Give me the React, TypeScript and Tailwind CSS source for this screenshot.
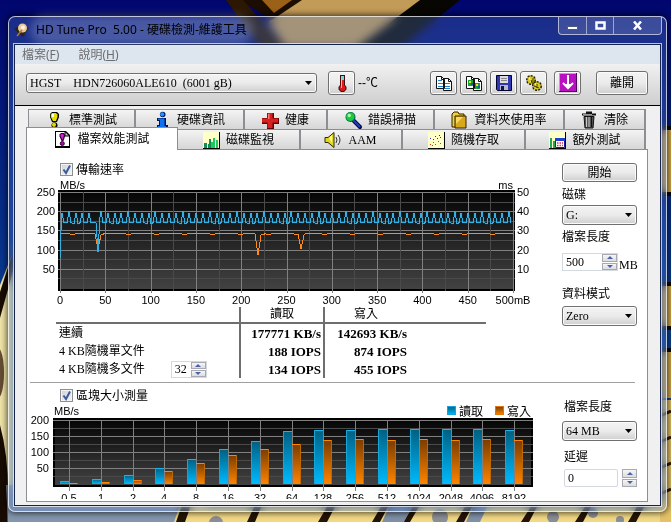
import { Fragment, type ReactNode } from "react";
import clsx from "clsx";

const READ_PEAKS = [
  2, 9, 16, 22, 29,
  ...Array.from({ length: 61 }, (_, i) => 41 + Math.round(i * 6.8)).filter((x) => x < 453),
];

const PLOT_W = 453;
const PLOT_H = 96;

const speedY = (speed: number) => PLOT_H - (speed / 250) * PLOT_H;

const readPoints = () => {
  const points: string[] = [`0,${speedY(75)}`];
  READ_PEAKS.forEach((x, i) => {
    const base = speedY(i % 5 === 2 ? 167 : 170);
    points.push(
      `${Math.max(x - 2, 1)},${i === 0 ? speedY(150) : base}`,
      `${x},${speedY(i % 4 === 1 ? 200 : 196)}`,
      `${x + 2},${base}`
    );
    if (x === 29) {
      points.push(`36,${speedY(170)}`, `38,${speedY(94)}`, `39,${speedY(140)}`);
    }
  });
  return points.join(" ");
};

const WRITE_DIPS = [
  { x: 38, low: 102 },
  { x: 198, low: 86 },
  { x: 241, low: 101 },
];

const writePoints = () => {
  const points: string[] = [`0,${speedY(128)}`, `1,${speedY(141)}`];
  for (let x = 5; x <= PLOT_W; x += 4) {
    const dip = WRITE_DIPS.find((d) => Math.abs(d.x - x) <= 3);
    if (dip) {
      if (!points.includes(`${dip.x},${speedY(dip.low)}`)) {
        points.push(
          `${dip.x - 3},${speedY(141)}`,
          `${dip.x},${speedY(dip.low)}`,
          `${dip.x + 3},${speedY(138)}`
        );
      }
      continue;
    }
    points.push(`${x},${speedY([141, 143, 142, 141, 139, 142, 141][(x * 3) % 7])}`);
  }
  return points.join(" ");
};

const BLOCKS = [
  { size: "0.5", read: 8, write: 2 },
  { size: "1", read: 17, write: 5 },
  { size: "2", read: 29, write: 14 },
  { size: "4", read: 51, write: 42 },
  { size: "8", read: 79, write: 67 },
  { size: "16", read: 110, write: 92 },
  { size: "32", read: 135, write: 110 },
  { size: "64", read: 166, write: 126 },
  { size: "128", read: 169, write: 138 },
  { size: "256", read: 169, write: 141 },
  { size: "512", read: 172, write: 138 },
  { size: "1024", read: 172, write: 141 },
  { size: "2048", read: 172, write: 138 },
  { size: "4096", read: 172, write: 141 },
  { size: "8192", read: 169, write: 138 },
];

const RESULTS = [
  { label: "連續", read: "177771 KB/s", write: "142693 KB/s" },
  { label: "4 KB隨機單文件", read: "188 IOPS", write: "874 IOPS" },
  { label: "4 KB隨機多文件", read: "134 IOPS", write: "455 IOPS", queue: true },
];

const Icon = ({ children }: { children: ReactNode }) => (
  <svg viewBox="0 0 16 16" className="size-4 shrink-0 overflow-visible" aria-hidden="true">
    {children}
  </svg>
);

const ExclamationIcon = () => (
  <Icon>
    <path d="M6 0h5l2 2v3l-2 5H6L4 5V2z" fill="#000" />
    <path d="M6 1h4l1.500 1.500V5L10 9H7L4.800 5V2.500z" fill="#e6e000" />
    <path d="M6 2h2v3H6z" fill="#fff" />
    <circle cx="8.500" cy="13.200" r="3" fill="#000" />
    <circle cx="8" cy="12.800" r="2.100" fill="#e0d800" />
  </Icon>
);

const InfoIcon = () => (
  <Icon>
    <circle cx="8.700" cy="2.500" r="2.800" fill="#001050" />
    <circle cx="8.200" cy="2.300" r="2.100" fill="#2090ff" />
    <path d="M3 6h9v7h2v3H3v-3h2V9H3z" fill="#001050" />
    <path d="M4 6.500h6.500V14H12v1H4v-1h2V8H4z" fill="#1070f0" />
  </Icon>
);

const CrossIcon = () => (
  <Icon>
    <path d="M5 1h7v5h5v6h-5v5H5v-5H0V6h5z" fill="#600" />
    <path d="M5.500 1h5v5.500H16v4h-5.500V16h-5v-5.500H0v-4h5.500z" fill="#d82020" />
    <path d="M6 2h1.500v5H1.500V7H6z" fill="#f77" />
  </Icon>
);

const SearchIcon = () => (
  <Icon>
    <path d="M8 8l7 7" stroke="#000040" strokeWidth="4" strokeLinecap="round" />
    <path d="M8.500 8.500l6 6" stroke="#2040c0" strokeWidth="2" strokeLinecap="round" />
    <circle cx="5.500" cy="5" r="5" fill="#064" />
    <circle cx="5.300" cy="4.800" r="4.200" fill="#20c840" />
    <circle cx="4.300" cy="3.500" r="1.700" fill="#a0ffa0" />
  </Icon>
);

const FolderIcon = () => (
  <Icon>
    <path d="M1 2l2-2h4l1 2h5v13H1z" fill="#f0d040" stroke="#302000" />
    <path d="M4 4h11v12H4z" fill="#d8a818" stroke="#302000" />
    <path d="M5 5h7L5 12z" fill="#f8d860" />
  </Icon>
);

const TrashIcon = () => (
  <Icon>
    <path d="M1 2.500h14M5 .500h6" stroke="#111" strokeWidth="2" />
    <path d="M3 4.500h10l-1 11.500H4z" fill="#555" stroke="#111" />
    <path d="M5.500 5v10M8 5v10" stroke="#ccc" />
    <path d="M10.500 5v10" stroke="#111" />
    <path d="M2 2.500h9" stroke="#999" />
  </Icon>
);

const FileTestIcon = () => (
  <Icon>
    <path d="M1 0h11l4 4v13H1z" fill="#000" />
    <path d="M2 1h9v4h4v10H2z" fill="#fff" />
    <path d="M11 1v4h4" fill="#ccc" stroke="#000" />
    <path d="M7 2h3l1 1.500v2L9.500 10h-2L5.500 5.500v-2z" fill="#300030" />
    <path d="M7 3h2l1 1-.500 2L8.500 9 6.500 5V4z" fill="#d020d0" />
    <circle cx="8.300" cy="12.500" r="2" fill="#a010a0" stroke="#300030" />
  </Icon>
);

const MonitorIcon = () => (
  <Icon>
    <path d="M0 0h17v17H0z" fill="#000" />
    <path d="M0 0h16v16H0z" fill="#ffffc8" />
    <path d="M1 16v-5h3v5zM5 16v-4h1V7h2v9z" fill="#109050" />
    <path d="M8 16v-6h2v6zM10 16V6h2v10zM13 16V8h2v8z" fill="#20c860" />
  </Icon>
);

const SpeakerIcon = () => (
  <Icon>
    <path d="M0 5.500h3l6-5v15l-6-5H0z" fill="#e0d820" stroke="#302800" />
    <path d="M4 6l3-3v8z" fill="#fff88c" />
    <path d="M11 5q2 3 0 6M13 3q4 5 0 10" fill="none" stroke="#333" />
  </Icon>
);

const ScatterIcon = () => (
  <Icon>
    <path d="M0 0h17v17H0z" fill="#000" />
    <path d="M0 0h16v16H0z" fill="#ffffc8" />
    <path d="M2 6h1v1H2zM5 7h1v1H5zM7 4h1v1H7zM11 3h1v1h-1zM9 6h1v1H9zM12 5h1v1h-1z" fill="#2030a0" />
    <path d="M2 12h1v1H2zM5 10h1v1H5zM7 12h1v1H7zM10 9h1v1h-1zM12 11h1v1h-1zM4 13h1v1H4z" fill="#e03030" />
  </Icon>
);

const ExtraIcon = () => (
  <Icon>
    <path d="M0 0h17v17H0z" fill="#000" />
    <path d="M0 0h16v16H0z" fill="#ffffc8" />
    <path d="M1 16V6h2v10zM4 16V9h2v7z" fill="#20a850" />
    <path d="M6.500 6.500h9v9h-9z" fill="#fff" stroke="#102090" />
    <path d="M6 6h10v3H6z" fill="#2040d0" />
    <path d="M8 11h6M8 13.500h6" stroke="#e03060" strokeWidth="1.500" strokeDasharray="1.500 1" />
  </Icon>
);

const ThermometerIcon = () => (
  <Icon>
    <path d="M6 0h5v10l1.500 2v2.500L10 17H7l-2.500-2.500V12L6 10z" fill="#401010" />
    <path d="M7 1h3v4H7z" fill="#70d8e0" />
    <path d="M7 5h3v7H7z" fill="#e02020" />
    <circle cx="8.500" cy="13" r="3" fill="#e01818" />
    <path d="M7 3h1v10H7z" fill="#ffb0b0" />
  </Icon>
);

const CopyIcon = ({ picture = false }: { picture?: boolean }) => (
  <Icon>
    <path d="M.500 1.500h5l3 3v9h-8zM7.500 3.500h5l3 3v9h-8z" fill="#fff" stroke="#111" />
    <path d="M5.500 1.500v3h3M12.500 3.500v3h3" fill="none" stroke="#111" />
    {picture ? (
      <>
        <path d="M2 5h5v6H2zM9 8h5v6H9z" fill="#18a030" />
        <path d="M3 6h2v2H3zM10 9h2v2h-2z" fill="#f0e020" />
        <path d="M5 8h2v2H5zM12 11h2v2h-2z" fill="#2050c0" />
      </>
    ) : (
      <path d="M2 5.500h4M2 8.500h5M2 11.500h5M9 8.500h5M9 11.500h5M9 13.500h5" stroke="#2080d8" />
    )}
  </Icon>
);

const SaveIcon = () => (
  <Icon>
    <path d="M.500.500h15v15h-14l-1-1z" fill="#3038b0" stroke="#000030" />
    <path d="M4 1h8v7H4z" fill="#ddd" />
    <path d="M5 3.500h6M5 5.500h6" stroke="#888" />
    <path d="M4 10h8v5H4z" fill="#b8b8c8" />
    <path d="M5 11h3v4H5z" fill="#101050" />
  </Icon>
);

const OptionsIcon = () => (
  <Icon>
    <circle cx="5" cy="5" r="4" fill="#d0c020" stroke="#282400" strokeWidth="2" strokeDasharray="2 1" />
    <circle cx="11" cy="11" r="4" fill="#d0c020" stroke="#282400" strokeWidth="2" strokeDasharray="2 1" />
    <circle cx="5" cy="5" r="3.500" fill="#d8c820" />
    <circle cx="11" cy="11" r="3.500" fill="#d8c820" />
    <path d="M3 2l2 5M9 8l3 5" stroke="#fff78c" />
    <path d="M5 5l1 3M7 3v5M11 9v4M8 11l5 2" stroke="#403800" />
  </Icon>
);

const DownloadIcon = () => (
  <svg viewBox="0 0 20 20" className="size-5 shrink-0" aria-hidden="true">
    <path d="M1 0h18v19H1z" fill="#500060" />
    <path d="M1 0h17v18H1z" fill="#b812c0" />
    <path d="M1 0h17v1H2v17H1z" fill="#e880ee" />
    <path d="M10 2v12M5 10l5 5 5-5" fill="none" stroke="#fff" strokeWidth="2" />
    <path d="M6 11h8l-4 5z" fill="#fff" />
  </svg>
);

const AppIcon = () => (
  <Icon>
    <path d="M0 7l7-5 8 4-6 9z" fill="#262626" />
    <circle cx="8.500" cy="6" r="4.500" fill="#e8c898" />
    <circle cx="9" cy="5.500" r="2" fill="#fff4de" />
    <path d="M8 8l-5 6" stroke="#b87030" strokeWidth="1.500" />
  </Icon>
);

const FIRST_ROW = [
  { label: "標準測試", icon: <ExclamationIcon /> },
  { label: "硬碟資訊", icon: <InfoIcon /> },
  { label: "健康", icon: <CrossIcon /> },
  { label: "錯誤掃描", icon: <SearchIcon /> },
  { label: "資料夾使用率", icon: <FolderIcon /> },
  { label: "清除", icon: <TrashIcon /> },
];

const SECOND_ROW = [
  { label: "檔案效能測試", icon: <FileTestIcon />, active: true },
  { label: "磁碟監視", icon: <MonitorIcon /> },
  { label: "AAM", icon: <SpeakerIcon /> },
  { label: "隨機存取", icon: <ScatterIcon /> },
  { label: "額外測試", icon: <ExtraIcon /> },
];

interface TabProps {
  label: string;
  icon: ReactNode;
  active?: boolean;
}

const Tab = ({ label, icon, active }: TabProps) => (
  <button
    role="tab"
    aria-selected={!!active}
    className={clsx(
      "flex items-center justify-center gap-[7px] whitespace-nowrap border-[#8c8e94]",
      active
        ? "z-10 -mt-0.5 -mb-px border-t border-x bg-white"
        : "border-t border-r-2 first:border-l bg-linear-to-b from-[#f4f4f4] to-[#d6d6d6]"
    )}
  >
    {icon}
    {label}
  </button>
);

const buttonStyle =
  "flex items-center justify-center rounded-[3px] border border-[#707070] bg-linear-to-b from-[#f3f3f3] via-[#ebebeb] via-50% to-[#cfcfcf] shadow-[inset_0_0_0_1px_#fbfbfb]";

const ToolButton = ({ label, children }: { label: string; children: ReactNode }) => (
  <button aria-label={label} className={clsx(buttonStyle, "h-6 w-[27px]")}>
    {children}
  </button>
);

interface DropDownProps {
  id: string;
  value: string;
  label?: string;
  className?: string;
}

const DropDown = ({ id, value, label, className }: DropDownProps) => (
  <div className={clsx("grid items-center", className)}>
    <select
      id={id}
      aria-label={label}
      className={clsx(buttonStyle, "col-start-1 row-start-1 h-5 w-full appearance-none pl-[3px]")}
    >
      <option>{value}</option>
    </select>
    <svg
      viewBox="0 0 7 4"
      className="pointer-events-none col-start-1 row-start-1 mr-[5px] h-1 w-[7px] justify-self-end"
      aria-hidden="true"
    >
      <path d="M0 0h7L3.500 4z" />
    </svg>
  </div>
);

const Spinner = () => (
  <span className="flex w-[15px] shrink-0 flex-col gap-px">
    {["M0 3h6L3 0z", "M0 0h6L3 3z"].map((d, i) => (
      <button
        key={d}
        aria-label={i ? "減少" : "增加"}
        className="flex flex-1 items-center justify-center border border-[#a9a9b4] bg-linear-to-b from-[#f6f6f6] to-[#dcdcdc]"
      >
        <svg viewBox="0 0 6 3" className="h-[3px] w-1.5">
          <path d={d} fill="#4a63a8" />
        </svg>
      </button>
    ))}
  </span>
);

const CheckBox = ({ id, label }: { id: string; label: string }) => (
  <div className="ml-[33px] flex h-[17px] items-center gap-[3px]">
    <span className="grid">
      <input
        id={id}
        type="checkbox"
        defaultChecked
        className="peer col-start-1 row-start-1 size-[13px] appearance-none border border-[#8e8f8f] bg-linear-to-br from-[#cdd2da] to-[#f6f6f6] shadow-[inset_0_0_0_1px_#f4f4f4]"
      />
      <svg
        viewBox="0 0 13 13"
        className="pointer-events-none invisible col-start-1 row-start-1 size-[13px] peer-checked:visible"
        aria-hidden="true"
      >
        <path d="M3.500 6.500L6 10l4-7.500" fill="none" stroke="#3d5b9c" strokeWidth="2" />
      </svg>
    </span>
    <label htmlFor={id}>{label}</label>
  </div>
);

const SpeedChart = () => (
  <svg
    viewBox="-33 -14 530 129"
    className="block w-full font-['Liberation_Sans',sans-serif] text-[11px]"
    role="img"
    aria-label="傳輸速率"
  >
    <defs>
      <linearGradient id="plot" x1="0" y1="0" x2="0" y2="1">
        <stop offset="0" stopColor="#050505" />
        <stop offset="1" stopColor="#424242" />
      </linearGradient>
    </defs>
    <rect x="-2" y="-2" width="457" height="101" fill="#000" />
    <rect x="0" y="0" width="453" height="97" fill="url(#plot)" />
    <g shapeRendering="crispEdges">
      {Array.from({ length: 10 }, (_, i) => (
        <path
          key={i}
          d={`M-2 ${i * 9.6 + 0.5}H455`}
          stroke={i % 2 ? "#4a4a4a" : "#808080"}
        />
      ))}
      {Array.from({ length: 21 }, (_, i) => (
        <path
          key={i}
          d={`M${i * 22.65 + 0.5} 0V${i % 2 ? 99 : 101}`}
          stroke={i % 2 ? "#4a4a4a" : "#808080"}
        />
      ))}
    </g>
    <g fill="none">
      <polyline points={readPoints()} stroke="#005c88" strokeWidth="3" opacity="0.2" />
      <g shapeRendering="crispEdges">
        <polyline points={writePoints()} stroke="#ff8a1c" />
        <polyline points={readPoints()} stroke="#36b0e0" />
      </g>
    </g>
    <text x="0" y="-3">MB/s</text>
    <text x="453" y="-3" textAnchor="end">ms</text>
    {[250, 200, 150, 100, 50].map((speed) => (
      <Fragment key={speed}>
        <text x="-5" y={speedY(speed) + 4} textAnchor="end">{speed}</text>
        <text x="457" y={speedY(speed) + 4}>{speed / 5}</text>
      </Fragment>
    ))}
    {Array.from({ length: 11 }, (_, i) => (
      <text key={i} x={i * 45.3} y="112" textAnchor="middle">
        {i === 10 ? "500mB" : i * 50}
      </text>
    ))}
  </svg>
);

const BlockChart = () => (
  <svg
    viewBox="-27 -17 530 95"
    className="block w-full font-['Liberation_Sans',sans-serif] text-[11px]"
    role="img"
    aria-label="區塊大小測量"
  >
    <defs>
      <linearGradient id="read" x1="0" y1="0" x2="0" y2="1">
        <stop offset="0" stopColor="#005f80" />
        <stop offset="1" stopColor="#00baff" />
      </linearGradient>
      <linearGradient id="write" x1="0" y1="0" x2="0" y2="1">
        <stop offset="0" stopColor="#783c00" />
        <stop offset="1" stopColor="#ff8400" />
      </linearGradient>
    </defs>
    <rect x="-1" y="-3" width="480" height="69" fill="#000" />
    <rect x="1" y="-1" width="476" height="65" fill="url(#plot)" />
    <g shapeRendering="crispEdges">
      {Array.from({ length: 8 }, (_, i) => (
        <path key={i} d={`M-1 ${i * 8 - 0.5}H479`} stroke={i % 2 ? "#4a4a4a" : "#808080"} />
      ))}
      {BLOCKS.map(({ size }, i) => (
        <path key={size} d={`M${i * 31.8 + 15.5} -1V70`} stroke="#808080" />
      ))}
    </g>
    {BLOCKS.map(({ size, read, write }, i) => {
      const x = Math.round(i * 31.8 + 15);
      const readH = Math.round(read * 0.32);
      const writeH = Math.round(write * 0.32);
      return (
        <Fragment key={size}>
          <rect x={x - 9} y={63 - readH} width="9" height={readH} fill="url(#read)" />
          <path d={`M${x - 9} ${63.5 - readH}h9`} stroke="#10b8f0" />
          <path d={`M${x - 8.5} 63v-${readH}`} stroke="#10a8dc" />
          <rect x={x + 1} y={63 - writeH} width="8" height={writeH} fill="url(#write)" />
          <path d={`M${x} ${63.5 - writeH}h9`} stroke="#ff8400" />
          <path d={`M${x + 8.5} 63v-${writeH}`} stroke="#c06800" />
          <text x={x} y="81" textAnchor="middle">{size}</text>
        </Fragment>
      );
    })}
    {[200, 150, 100, 50].map((speed, i) => (
      <text key={speed} x="-5" y={i * 16 + 3} textAnchor="end">{speed}</text>
    ))}
    <text x="0" y="-6">MB/s</text>
    <rect x="393.500" y="-14.500" width="8" height="8" fill="url(#read)" stroke="#10a8dc" />
    <rect x="441.500" y="-14.500" width="8" height="8" fill="url(#write)" stroke="#e07800" />
    <g className="font-['Noto_Sans_CJK_TC',sans-serif] text-[12px]">
      <text x="405" y="-5">讀取</text>
      <text x="453" y="-5">寫入</text>
    </g>
  </svg>
);

const ResultTable = () => (
  <table className="ml-[29px] w-[430px] table-fixed border-collapse text-left leading-[17px]">
    <thead>
      <tr className="h-4 border-b-2 border-[#6e6e6e] leading-[13px]">
        <td className="w-[184px] p-0" />
        <th className="w-[84px] border-x-2 border-[#6e6e6e] p-0 text-center font-normal">讀取</th>
        <th className="p-0 pr-[79px] text-center font-normal">寫入</th>
      </tr>
    </thead>
    <tbody>
      {RESULTS.map(({ label, read, write, queue }) => (
        <tr key={label} className="h-[18px]">
          <th className="p-0 pl-[3px] font-normal">
            <div className="flex h-[18px] items-center gap-[26px]">
              <span>{label}</span>
              {queue && (
                <span className="flex h-[17px] w-9 border border-[#d4d8e0]">
                  <input
                    aria-label="佇列深度"
                    defaultValue="32"
                    className="w-0 flex-1 pl-[3px] outline-none"
                  />
                  <Spinner />
                </span>
              )}
            </div>
          </th>
          <td className="border-x-2 border-[#6e6e6e] p-0 pr-0.5 text-right text-[13px] font-bold">
            {read}
          </td>
          <td className="p-0 pr-[79px] text-right text-[13px] font-bold">{write}</td>
        </tr>
      ))}
    </tbody>
  </table>
);

const Wallpaper = () => (
  <svg
    viewBox="0 0 671 522"
    preserveAspectRatio="none"
    className="absolute inset-0 size-full"
    aria-hidden="true"
  >
    <defs>
      <linearGradient id="sky" x1="0" y1="0" x2="0" y2="1">
        <stop offset="0" stopColor="#00066e" />
        <stop offset="0.6" stopColor="#0a3f94" />
        <stop offset="1" stopColor="#1e4f98" />
      </linearGradient>
    </defs>
    <path d="M0 0h671v522H0z" fill="url(#sky)" />
    <path d="M300 0h122l-66 48h-70l-18-26z" fill="#c39b58" />
    <path d="M420 0h40l-74 60h-46z" fill="#080602" />
    <path d="M240 0h62l-30 20z" fill="#1c0d02" />
    <path d="M262 0h30l-18 13z" fill="#9c6118" />
    <path d="M226 0h17l54 60h-28z" fill="#2c1703" />
    <path d="M0 285l16-40v260H0z" fill="#efe3a4" />
    <path d="M0 292l15-46v18L0 318zM0 425q11 40 7 97H0z" fill="#180b02" />
    <ellipse cx="-2" cy="373" rx="6" ry="25" fill="#644b34" />
    <path d="M6 485h200v37H8z" fill="#8496ae" />
    <path d="M660 128h11v66h-11zM660 285h11v42h-11zM660 348h11v50h-11z" fill="#d4a94f" />
    <path d="M660 128h11M660 194h11M660 284h11M660 328h11M660 350h11" stroke="#0a0804" strokeWidth="4" />
    <path d="M180 505h491v17H174z" fill="#f2d985" />
    <path d="M660 400h11v122h-11z" fill="#e5c269" />
    <path d="M660 416l11-5M660 442l11-5M660 468l11-5M660 494l11-5" stroke="#281605" strokeWidth="3" />
    <path d="M182 505h9l-6 17h-9zM255 505h7l-7 17h-8zM328 505h8l-9 17h-9zM382 505h7l-9 17h-8zM414 505h6l-10 17h-7zM466 505h7l-9 17h-8zM532 505h6l-9 17h-8zM586 505h6l-9 17h-8zM638 505h7l-9 17h-8z" fill="#241405" />
    <path d="M390 505h23l-9 17h-22zM474 505h14l-8 17h-14z" fill="#8090a6" />
    <g fill="#8b8e94">
      <circle cx="216" cy="523" r="7" />
      <circle cx="440" cy="517" r="8" />
      <circle cx="553" cy="517" r="6" />
      <circle cx="593" cy="513" r="5" />
      <circle cx="620" cy="520" r="4" />
    </g>
  </svg>
);

const TitleBar = () => (
  <header className="flex h-[26px] items-start justify-between">
    <div className="ml-px flex items-center gap-1.5 pt-1">
      <AppIcon />
      <h1 className="whitespace-pre rounded-full bg-white/20 font-['Noto_Sans','Noto_Sans_CJK_TC',sans-serif] text-[12px] leading-[18px] shadow-[0_0_8px_6px_rgba(255,255,255,0.2)]">
        {"HD Tune Pro  5.00 - 硬碟檢測-維護工具"}
      </h1>
    </div>
    <div className="flex h-[18px] divide-x divide-white/50 rounded-b-[4px] border border-t-0 border-white/60 bg-white/15">
      <button aria-label="最小化" className="flex w-7 items-center justify-center">
        <svg viewBox="0 0 11 9" className="h-[9px] w-[11px]">
          <path d="M.500 5.500h10v3H.500z" fill="#fff" stroke="#505878" />
        </svg>
      </button>
      <button aria-label="最大化" className="flex w-[27px] items-center justify-center">
        <svg viewBox="0 0 11 9" className="h-[9px] w-[11px]">
          <path d="M1.500 1.500h8v6h-8z" fill="none" stroke="#fff" strokeWidth="2.500" />
        </svg>
      </button>
      <button aria-label="關閉" className="flex w-[47px] items-center justify-center">
        <svg viewBox="0 0 11 9" className="h-[9px] w-[11px]">
          <path d="M2 .500l7 8M9 .500l-7 8" stroke="#fff" strokeWidth="2.500" />
        </svg>
      </button>
    </div>
  </header>
);

const ToolBar = () => (
  <div className="flex h-[42px] items-center border-b border-black bg-linear-to-b from-[#f1f1f1] to-[#cecece] pr-3 pb-[3px] pl-[11px]">
    <DropDown
      id="drive"
      label="硬碟"
      value={"HGST\u00a0\u00a0\u00a0\u00a0HDN726060ALE610\u00a0\u00a0(6001 gB)"}
      className="mr-[11px] w-[291px]"
    />
    <ToolButton label="溫度">
      <ThermometerIcon />
    </ToolButton>
    <span className="ml-[3px] font-['Liberation_Sans','Noto_Sans_CJK_TC',sans-serif]">--℃</span>
    <div className="ml-auto flex gap-[3px]">
      <ToolButton label="複製文字">
        <CopyIcon />
      </ToolButton>
      <ToolButton label="複製圖片">
        <CopyIcon picture />
      </ToolButton>
      <ToolButton label="儲存">
        <SaveIcon />
      </ToolButton>
      <ToolButton label="選項">
        <OptionsIcon />
      </ToolButton>
    </div>
    <div className="ml-[7px] flex gap-[15px]">
      <ToolButton label="下載">
        <DownloadIcon />
      </ToolButton>
      <button className={clsx(buttonStyle, "h-6 w-[52px]")}>離開</button>
    </div>
  </div>
);

export default function App() {
  return (
    <div className="relative min-h-screen overflow-hidden pt-4 pr-1 pb-2.5 pl-2 font-['Liberation_Serif','Noto_Sans_CJK_TC',serif] text-[12px] leading-4 text-black">
      <Wallpaper />
      <div className="relative rounded-[7px] border border-white/70 bg-[#5a80c8]/30 px-1 pb-1 shadow-[0_0_6px_1px_rgba(0,0,0,0.7)] backdrop-blur-[5px]">
        <TitleBar />
        <div className="border border-white/70">
          <div className="border border-[#14244c] bg-[#f0f0f0]">
            <nav className="flex h-[19px] items-center gap-[19px] bg-[#dde5ef] pl-[7px] font-['Noto_Sans','Noto_Sans_CJK_TC',sans-serif] text-[#6d6d6d]">
              <button className="leading-4">
                檔案(<u>F</u>)
              </button>
              <button className="leading-4">
                說明(<u>H</u>)
              </button>
            </nav>
            <ToolBar />
            <main className="pt-[3px] pr-3 pb-[3px] pl-[11px]">
              <div role="tablist">
                <div className="mx-0.5 grid h-5 grid-cols-[108fr_109fr_83fr_107fr_130fr_81fr]">
                  {FIRST_ROW.map((tab) => (
                    <Tab key={tab.label} {...tab} />
                  ))}
                </div>
                <div className="mr-0.5 grid h-5 grid-cols-[152fr_123fr_102fr_123fr_120fr]">
                  {SECOND_ROW.map((tab) => (
                    <Tab key={tab.label} {...tab} />
                  ))}
                </div>
              </div>
              <div role="tabpanel" className="border border-[#8c8e94] bg-white">
                <section className="flex pb-1">
                  <div className="min-w-0 flex-1 pt-[11px]">
                    <CheckBox id="transfer" label="傳輸速率" />
                    <SpeedChart />
                    <ResultTable />
                  </div>
                  <div className="flex w-[90px] flex-col pt-[13px] pr-2.5 pl-[5px]">
                    <button className={clsx(buttonStyle, "h-[19px]")}>開始</button>
                    <label htmlFor="disk" className="mt-[5px]">磁碟</label>
                    <DropDown id="disk" value="G:" className="mt-0.5" />
                    <label htmlFor="length" className="mt-1">檔案長度</label>
                    <div className="mt-2 flex h-[18px] items-end gap-px">
                      <span className="flex h-[18px] w-14 shrink-0 border border-[#d4d8e0]">
                        <input
                          id="length"
                          defaultValue="500"
                          className="w-0 flex-1 pl-[3px] outline-none"
                        />
                        <Spinner />
                      </span>
                      <span className="leading-3">MB</span>
                    </div>
                    <label htmlFor="mode" className="mt-[15px]">資料模式</label>
                    <DropDown id="mode" value="Zero" className="mt-1" />
                  </div>
                </section>
                <hr className="mr-3 ml-[3px] border-[#a0a0a0]" />
                <section className="flex pb-0.5">
                  <div className="min-w-0 flex-1 pt-1">
                    <CheckBox id="blocks" label="區塊大小測量" />
                    <BlockChart />
                  </div>
                  <div className="flex w-[90px] flex-col pt-4 pr-2.5 pl-[5px]">
                    <label htmlFor="block-length" className="pl-0.5">檔案長度</label>
                    <DropDown id="block-length" value="64 MB" className="mt-1.5" />
                    <label htmlFor="delay" className="mt-2 pl-0.5">延遲</label>
                    <div className="mt-1 flex h-[18px] justify-between pl-0.5">
                      <input
                        id="delay"
                        defaultValue="0"
                        className="w-[54px] rounded-[2px] border border-[#d4d8e0] pl-[3px] outline-none"
                      />
                      <Spinner />
                    </div>
                  </div>
                </section>
              </div>
            </main>
          </div>
        </div>
      </div>
    </div>
  );
}
